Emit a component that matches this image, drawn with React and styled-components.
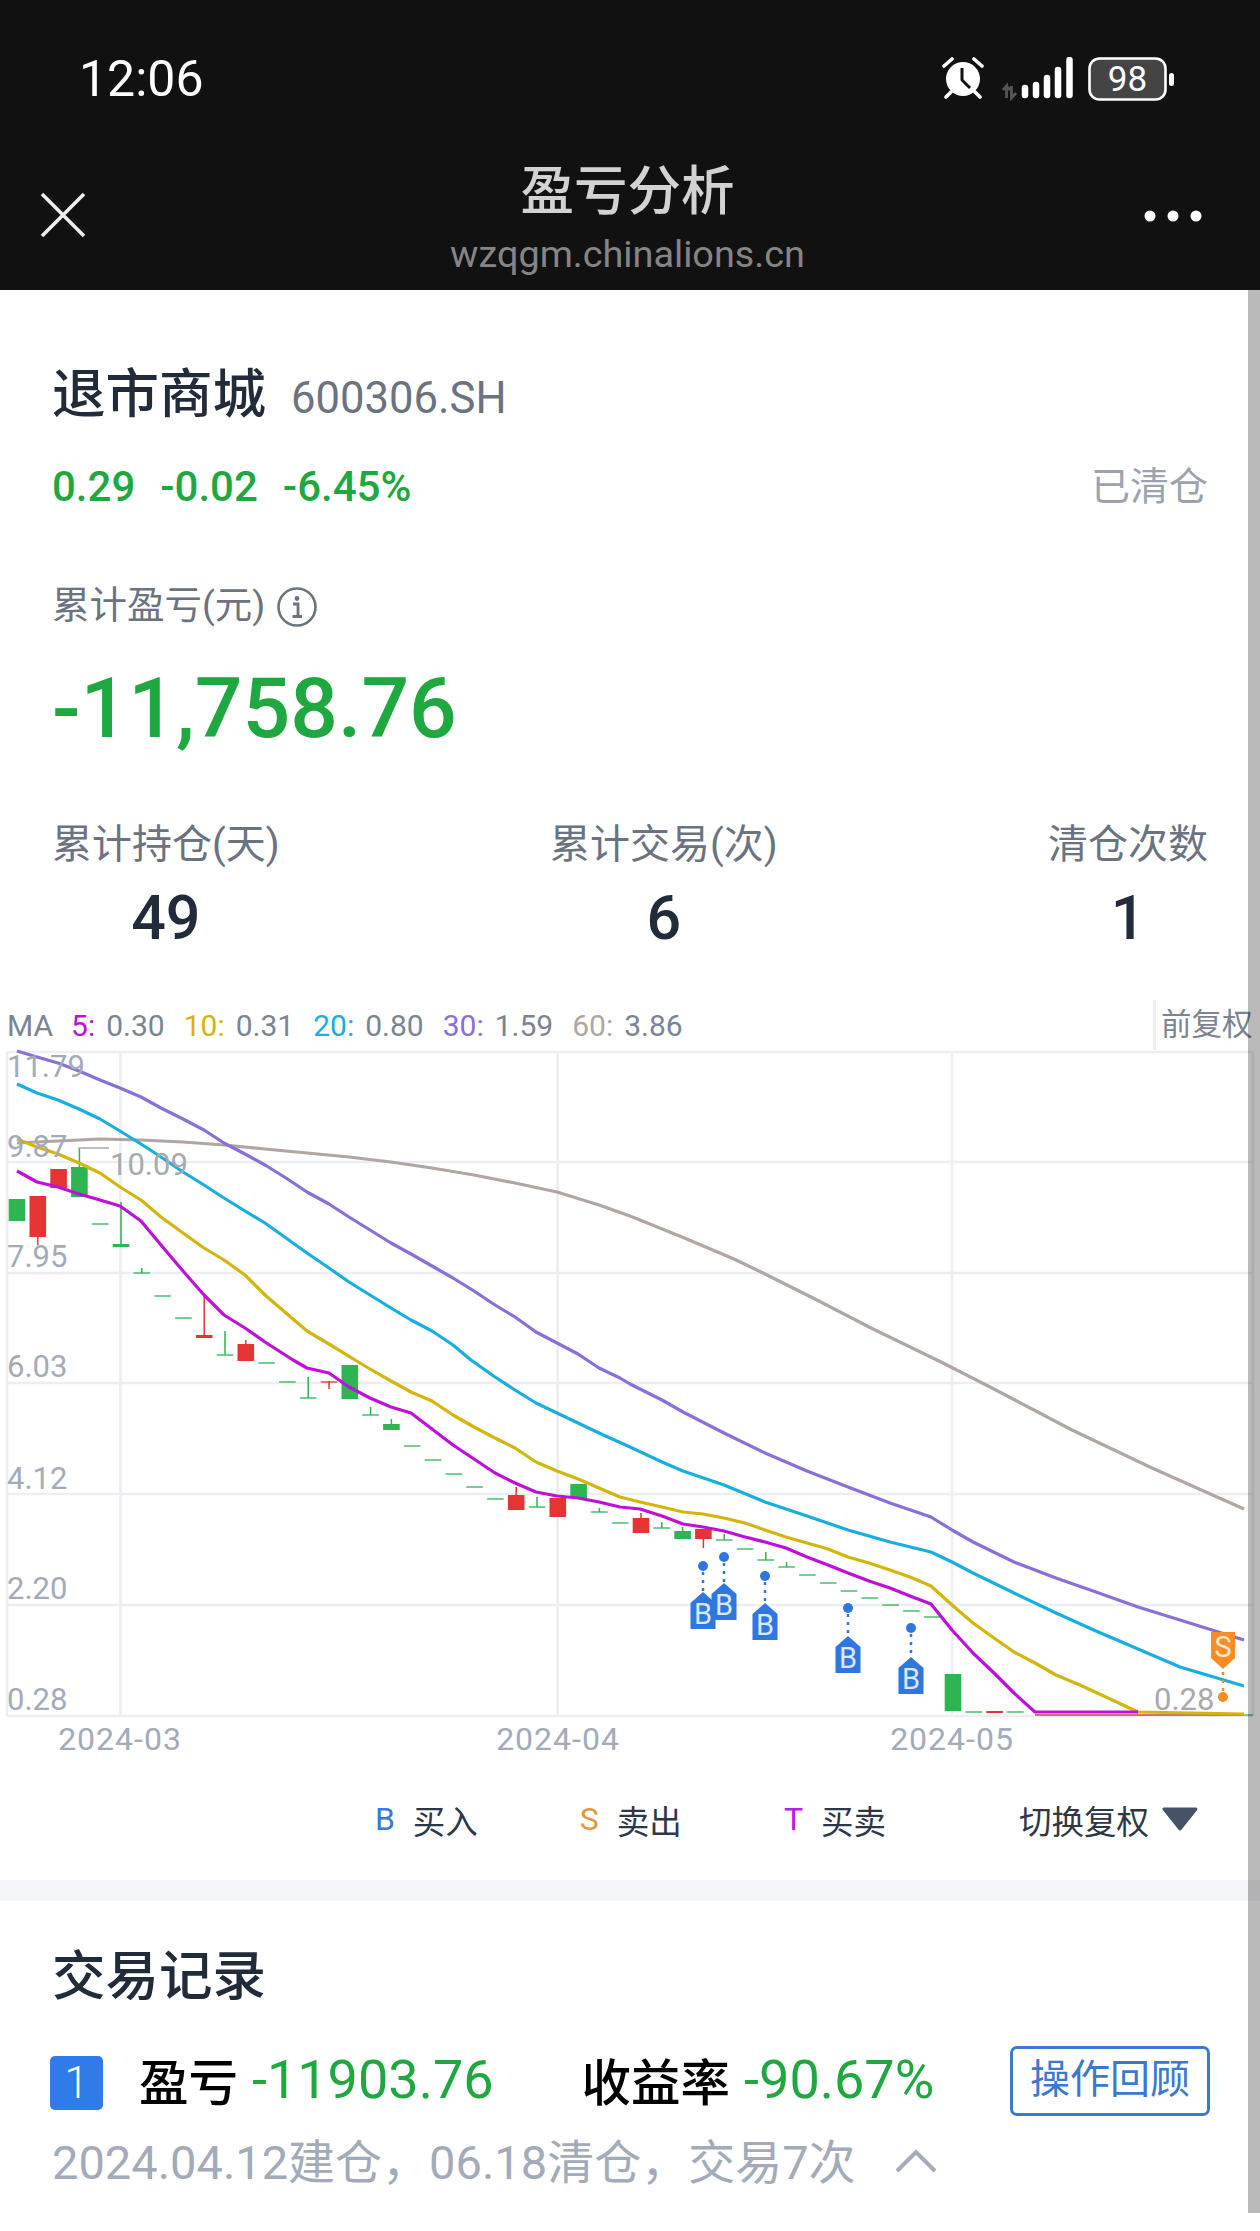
import React from "react";
import styled, { createGlobalStyle } from "styled-components";

const GlobalStyle = createGlobalStyle`
  html, body {
    margin: 0;
    padding: 0;
    background: #fff;
  }
  body {
    font-family: Roboto, "Noto Sans CJK SC", sans-serif;
  }
`;

const Page = styled.div`
  position: relative;
  width: 1260px;
  height: 2231px;
  overflow: hidden;
  background: #fff;
`;

const Scrollbar = styled.div`
  position: absolute;
  top: 290px;
  right: 0;
  width: 12px;
  height: 1923px;
  background: rgba(0, 0, 0, 0.27);
`;

const Header = styled.header`
  height: 290px;
  background: #111;
  box-sizing: border-box;
  padding-top: 50px;
`;

const StatusBar = styled.div`
  height: 58px;
  padding: 0 84px 0 79px;
  display: flex;
  align-items: center;
  justify-content: space-between;
`;

const Time = styled.div`
  color: #fff;
  font-size: 50px;
  line-height: 58px;
`;

const StatusIcons = styled.div`
  display: flex;
  align-items: flex-start;
  height: 44px;
`;

const NavBar = styled.div`
  position: relative;
  display: flex;
  justify-content: space-between;
  align-items: flex-end;
  padding: 56px 58px 56px 40px;
`;

const TitleBlock = styled.div`
  flex: 1;
  text-align: center;
  margin-left: 25px;
`;

const Title = styled.div`
  color: #d2d2d2;
  font-size: 53.5px;
  line-height: 56px;
  font-weight: 500;
`;

const SubTitle = styled.div`
  color: #858585;
  font-size: 37.8px;
  line-height: 40px;
  margin-top: 14px;
`;

const NavIcon = styled.svg`
  display: block;
  margin-bottom: ${(props) => props.lift}px;
`;

const Section = styled.section`
  padding: 0 52px;
`;

const NameRow = styled.div`
  display: flex;
  align-items: baseline;
  gap: 25px;
  padding-top: 75px;
`;

const StockName = styled.div`
  color: #222b3a;
  font-size: 53.5px;
  line-height: 60px;
  font-weight: 500;
`;

const StockCode = styled.div`
  color: #6b7280;
  font-size: 43.6px;
  line-height: 60px;
`;

const QuoteRow = styled.div`
  display: flex;
  align-items: center;
  margin-top: 35px;
  height: 44px;
`;

const Quote = styled.div`
  color: #1fa83f;
  font-size: 42px;
  font-weight: 500;
  margin-right: 25px;
`;

const Status = styled.div`
  color: #9ca3af;
  font-size: 39px;
  margin-left: auto;
  margin-bottom: 6px;
`;

const ProfitLabel = styled.div`
  display: flex;
  align-items: center;
  gap: 12px;
  margin-top: 71px;
  height: 44px;
  color: #6b7280;
  font-size: 37.5px;
`;

const InfoSvg = styled.svg`
  display: block;
  margin-top: 12px;
`;

const Profit = styled.div`
  color: #1fa83f;
  font-size: 84px;
  line-height: 100px;
  font-weight: 500;
  margin-top: 36px;
`;

const Stats = styled.div`
  display: flex;
  justify-content: space-between;
  margin-top: 62px;
`;

const Stat = styled.div`
  display: flex;
  flex-direction: column;
  align-items: center;
`;

const StatLabel = styled.div`
  color: #6b7280;
  font-size: 40px;
  line-height: 48px;
`;

const StatValue = styled.div`
  color: #222b3a;
  font-size: 61px;
  line-height: 64px;
  font-weight: 500;
  margin-top: 17px;
`;

const MaBar = styled.div`
  display: flex;
  align-items: center;
  height: 50px;
  margin-top: 50px;
  padding-left: 7px;
  font-size: 30px;
  color: #7b8494;
`;

const MaName = styled.span`
  margin-right: 18px;
`;

const MaItem = styled.span`
  margin-right: 19px;
  white-space: nowrap;
`;

const MaKey = styled.span`
  color: ${(props) => props.color};
  margin-right: 11px;
`;

const AdjustTag = styled.div`
  margin-left: auto;
  height: 50px;
  line-height: 50px;
  box-sizing: border-box;
  border-left: 3px solid #eceef4;
  padding-left: 5px;
  width: 107px;
  white-space: nowrap;
  font-size: 30.5px;
`;

const ChartSvg = styled.svg`
  display: block;
  width: 1260px;
  height: 720px;
  overflow: visible;
`;

const Legend = styled.div`
  display: flex;
  align-items: center;
  justify-content: flex-end;
  height: 50px;
  margin-top: 24px;
  padding-right: 61px;
  color: #2d3748;
  font-size: 32.5px;
`;

const LegendItem = styled.div`
  display: flex;
  align-items: center;
  gap: 18px;
  margin-right: 102px;
`;

const LegendKey = styled.span`
  color: ${(props) => props.color};
  font-size: 32px;
`;

const Switcher = styled.div`
  display: flex;
  align-items: center;
  gap: 12px;
  margin-left: 31px;
`;

const Divider = styled.div`
  height: 21px;
  margin-top: 36px;
  background: #f4f5f8;
`;

const RecordTitle = styled.div`
  color: #222b3a;
  font-size: 53.5px;
  line-height: 60px;
  font-weight: 500;
  padding-top: 46px;
`;

const RecordRow = styled.div`
  display: flex;
  align-items: center;
  margin-top: 39px;
  height: 70px;
`;

const Badge = styled.div`
  width: 53px;
  height: 54px;
  margin: 4px 36px 0 -2px;
  border-radius: 5px;
  background: #2f7bea;
  color: #fff;
  font-size: 44px;
  font-weight: 300;
  line-height: 54px;
  text-align: center;
`;

const RecordKey = styled.div`
  color: #000;
  font-size: 49.5px;
  font-weight: 500;
  margin: 0 14px 4px 0;
`;

const RecordValue = styled.div`
  color: #1fa83f;
  font-size: 54px;
  margin: 0 ${(props) => props.gap || 0}px 4px 0;
`;

const ReviewButton = styled.div`
  margin: 0 -2px 0 auto;
  width: 200px;
  height: 70px;
  box-sizing: border-box;
  border: 3px solid #3b78d0;
  border-radius: 7px;
  color: #3b78d0;
  font-size: 40px;
  line-height: 62px;
  text-align: center;
`;

const RecordMeta = styled.div`
  display: flex;
  align-items: center;
  margin-top: 12px;
  height: 60px;
  color: #a3abb8;
  font-size: 47px;
  white-space: nowrap;
`;

const Chevron = styled.svg`
  display: block;
  margin: 6px 0 0 39px;
`;

const MA_LINES = [
  { key: "5:", value: "0.30", color: "#bf10d8" },
  { key: "10:", value: "0.31", color: "#d4b50e" },
  { key: "20:", value: "0.80", color: "#19aee0" },
  { key: "30:", value: "1.59", color: "#8a6fd8" },
  { key: "60:", value: "3.86", color: "#b0a6a2" },
];

const GRID_Y = [1052, 1162, 1273, 1383, 1494, 1605, 1716];
const GRID_X = [7, 120.5, 557.6, 952, 1253];
const PRICE_LABELS = [
  ["11.79", 1077],
  ["9.87", 1157],
  ["7.95", 1267],
  ["6.03", 1377],
  ["4.12", 1489],
  ["2.20", 1599],
  ["0.28", 1710],
];
const DATE_LABELS = [
  ["2024-03", 120],
  ["2024-04", 558],
  ["2024-05", 952],
];

// [slot, colour, body top, body bottom, wick top, wick bottom]
const CANDLES = [
  [0, "g", 1199, 1221],
  [1, "r", 1196, 1237, 1196, 1245],
  [2, "r", 1169, 1188],
  [3, "g", 1167, 1197, 1149, 1197],
  [4, "g", 1224, 1224],
  [5, "g", 1244, 1247, 1202, 1247],
  [6, "g", 1273, 1273, 1268, 1273],
  [7, "g", 1296, 1296],
  [8, "g", 1318, 1318],
  [9, "r", 1335, 1338, 1296, 1338],
  [10, "g", 1355, 1355, 1331, 1355],
  [11, "r", 1344, 1361, 1340, 1361],
  [12, "g", 1363, 1363],
  [13, "g", 1382, 1382],
  [14, "g", 1398, 1398, 1377, 1398],
  [15, "r", 1382, 1382, 1381, 1389],
  [16, "g", 1365, 1399],
  [17, "g", 1415, 1415, 1407, 1415],
  [18, "g", 1424, 1430, 1419, 1430],
  [19, "g", 1446, 1446],
  [20, "g", 1460, 1460],
  [21, "g", 1474, 1474],
  [22, "g", 1487, 1487],
  [23, "g", 1499, 1499],
  [24, "r", 1495, 1510, 1487, 1510],
  [25, "g", 1507, 1507, 1497, 1507],
  [26, "r", 1498, 1517],
  [27, "g", 1484, 1498],
  [28, "g", 1512, 1512, 1508, 1512],
  [29, "g", 1523, 1523],
  [30, "r", 1518, 1533, 1513, 1533],
  [31, "g", 1528, 1528, 1522, 1528],
  [32, "g", 1531, 1539, 1527, 1539],
  [33, "r", 1529, 1539, 1529, 1548],
  [34, "g", 1540, 1540, 1534, 1540],
  [35, "g", 1549, 1549],
  [36, "g", 1560, 1560, 1552, 1560],
  [37, "g", 1567, 1567, 1562, 1567],
  [38, "g", 1575, 1575],
  [39, "g", 1583, 1583],
  [40, "g", 1591, 1591],
  [41, "g", 1598, 1598],
  [42, "g", 1605, 1605],
  [43, "g", 1611, 1611],
  [44, "g", 1617, 1617],
  [45, "g", 1674, 1711],
  [46, "g", 1712, 1712],
  [47, "r", 1711, 1713],
  [48, "g", 1712, 1712],
];

const CURVES = [
  {
    color: "#b0a6a2",
    points:
      "17,1143 37,1142 58,1141 100,1139 141,1140 183,1142 224,1145 265,1149 307,1153 349,1157 391,1162 432,1168 474,1175 515,1183 557,1192 599,1205 630,1216 682,1237 734,1259 763,1273 815,1299 871,1328 941,1362 992,1388 1072,1430 1152,1468 1244,1509",
  },
  {
    color: "#8a6fd8",
    points:
      "17,1051 37,1057 58,1063 79,1071 100,1080 120,1088 141,1097 161,1108 183,1119 204,1130 224,1143 245,1154 265,1165 286,1178 307,1192 329,1204 349,1217 370,1230 391,1243 411,1254 432,1266 453,1278 474,1291 495,1305 515,1317 536,1332 557,1343 578,1354 599,1368 620,1378 630,1384 662,1400 683,1412 724,1433 765,1453 807,1471 848,1487 890,1503 931,1517 952,1530 973,1542 1014,1562 1056,1578 1096,1592 1138,1607 1180,1620 1244,1640",
  },
  {
    color: "#19aee0",
    points:
      "17,1084 37,1093 58,1100 79,1109 100,1119 120,1131 141,1144 161,1157 183,1172 204,1185 224,1198 245,1211 265,1223 286,1238 307,1253 329,1268 349,1282 370,1295 391,1308 411,1320 432,1331 453,1345 471,1360 495,1377 515,1390 536,1403 557,1413 578,1423 599,1433 630,1447 662,1462 683,1471 724,1485 765,1502 807,1516 848,1530 890,1542 931,1552 952,1562 973,1573 1014,1593 1056,1613 1096,1631 1138,1649 1180,1667 1244,1686",
  },
  {
    color: "#d4b50e",
    points:
      "17,1139 37,1147 58,1154 79,1163 100,1173 120,1187 141,1200 161,1217 183,1233 204,1248 224,1260 245,1275 265,1295 286,1313 307,1331 329,1344 355,1360 370,1369 391,1381 411,1392 432,1401 453,1415 474,1427 495,1438 515,1448 536,1462 557,1471 578,1479 599,1488 620,1497 640,1502 662,1507 683,1512 703,1514 724,1518 745,1523 765,1530 786,1537 807,1543 828,1549 848,1557 869,1563 890,1570 910,1577 931,1586 952,1605 973,1623 994,1638 1014,1652 1035,1663 1056,1675 1080,1685 1108,1698 1138,1712 1244,1714",
  },
  {
    color: "#bf10d8",
    points:
      "17,1171 37,1182 58,1187 79,1194 100,1200 120,1206 141,1221 161,1245 183,1271 204,1295 224,1315 245,1328 265,1342 293,1360 307,1368 329,1373 349,1387 370,1398 391,1407 411,1413 432,1429 453,1445 474,1459 495,1473 515,1483 536,1492 557,1496 578,1498 599,1502 620,1507 640,1509 662,1516 683,1524 703,1527 724,1531 745,1537 765,1542 786,1548 807,1557 828,1565 848,1573 869,1581 890,1588 910,1596 931,1604 952,1630 973,1653 994,1673 1014,1693 1035,1712 1138,1712",
  },
];

const BUY_MARKS = [
  { x: 703, dot: 1566, top: 1592 },
  { x: 724, dot: 1557, top: 1583 },
  { x: 765, dot: 1576, top: 1603 },
  { x: 848, dot: 1608, top: 1636 },
  { x: 911, dot: 1628, top: 1657 },
];

const slotX = (slot) => 17 + 20.8 * slot;
const CANDLE_COLOR = { g: "#2db552", r: "#e53433" };

const Candle = ({ slot, kind, top, bottom, hi, lo }) => {
  const x = slotX(slot);
  const color = CANDLE_COLOR[kind];
  return (
    <g>
      {hi !== undefined && (
        <line x1={x} x2={x} y1={hi} y2={lo} stroke={color} strokeWidth="1.5" />
      )}
      {top === bottom ? (
        <line x1={x - 8.3} x2={x + 8.3} y1={top} y2={top} stroke={color} strokeWidth="1.3" />
      ) : (
        <rect x={x - 8.3} y={top} width="16.6" height={bottom - top} fill={color} />
      )}
    </g>
  );
};

const BuyMark = ({ x, dot, top }) => (
  <g>
    <circle cx={x} cy={dot} r="5" fill="#2f76e0" />
    <line x1={x} x2={x} y1={dot + 6} y2={top} stroke="#2f76e0" strokeWidth="2.5" strokeDasharray="3 5" />
    <path
      d={`M${x} ${top} L${x + 12.5} ${top + 11} V${top + 37} H${x - 12.5} V${top + 11} Z`}
      fill="#2f76e0"
    />
    <text x={x} y={top + 32} fontSize="29" fill="#dbe8fb" textAnchor="middle" fontFamily="Roboto, sans-serif">
      B
    </text>
  </g>
);

const SellMark = () => (
  <g>
    <circle cx="1223" cy="1697" r="5" fill="#fa8c25" />
    <line x1="1223" x2="1223" y1="1691" y2="1666" stroke="#fa8c25" strokeWidth="2.5" strokeDasharray="3 5" />
    <path d="M1211 1632 H1235 V1658 L1223 1669 L1211 1658 Z" fill="#fa8c25" />
    <text x="1223" y="1657" fontSize="29" fill="#ffe9d2" textAnchor="middle" fontFamily="Roboto, sans-serif">
      S
    </text>
  </g>
);

const KLineChart = () => (
  <ChartSvg viewBox="0 1050 1260 720">
    {GRID_Y.map((y) => (
      <line key={y} x1="7" x2="1253" y1={y} y2={y} stroke="#eceef4" strokeWidth="2.6" />
    ))}
    {GRID_X.map((x) => (
      <line key={x} x1={x} x2={x} y1="1052" y2="1716" stroke="#eceef4" strokeWidth="2.6" />
    ))}

    {CANDLES.map(([slot, kind, top, bottom, hi, lo]) => (
      <Candle key={slot} slot={slot} kind={kind} top={top} bottom={bottom} hi={hi} lo={lo} />
    ))}
    <line x1="1035" x2="1244" y1="1715" y2="1715" stroke="#c2483e" strokeWidth="1.5" />
    <line x1="1244" x2="1253" y1="1715" y2="1715" stroke="#2db552" strokeWidth="1.2" />

    <path d="M79 1149 V1148 H109" fill="none" stroke="#a9a9a9" strokeWidth="1.5" />

    {CURVES.map((curve) => (
      <polyline
        key={curve.color}
        points={curve.points}
        fill="none"
        stroke={curve.color}
        strokeWidth="3.2"
        strokeLinejoin="round"
      />
    ))}

    <g fontFamily="Roboto, sans-serif" fontSize="31" fill="#a3abb8">
      {PRICE_LABELS.map(([label, y]) => (
        <text key={label} x="7" y={y}>
          {label}
        </text>
      ))}
    </g>
    <g fontFamily="Roboto, sans-serif" fontSize="32" letterSpacing="1" fill="#a3abb8">
      {DATE_LABELS.map(([label, x]) => (
        <text key={label} x={x} y="1750" textAnchor="middle">
          {label}
        </text>
      ))}
    </g>
    <g fontFamily="Roboto, sans-serif" fontSize="31" fill="#a9a9a9">
      <text x="110" y="1175">10.09</text>
      <text x="1154" y="1710">0.28</text>
    </g>

    {BUY_MARKS.map((mark) => (
      <BuyMark key={mark.x} x={mark.x} dot={mark.dot} top={mark.top} />
    ))}
    <SellMark />
  </ChartSvg>
);

const AlarmIcon = () => (
  <svg width="42" height="42" viewBox="0 0 42 42">
    <circle cx="21" cy="22" r="17" fill="#fff" />
    <path d="M20 11 V23 L28 31" fill="none" stroke="#111" strokeWidth="3" strokeLinejoin="round" />
    <path d="M2 9 L10 2 M40 9 L32 2 M9 35 L4 40 M33 35 L38 40" stroke="#fff" strokeWidth="3.6" strokeLinecap="round" />
  </svg>
);

const SignalIcon = () => (
  <svg width="76" height="44" viewBox="0 0 76 44" style={{ marginLeft: 16 }}>
    <path d="M3 33 L6.5 29 V41 M6.5 29 L10 33 M11.5 29 V41 L16 36" fill="none" stroke="#555" strokeWidth="2.8" />
    <g stroke="#fff" strokeWidth="6.5" strokeLinecap="round">
      <line x1="25" x2="25" y1="31" y2="38" />
      <line x1="36" x2="36" y1="28" y2="38" />
      <line x1="47" x2="47" y1="21" y2="38" />
      <line x1="58" x2="58" y1="13" y2="38" />
      <line x1="69.5" x2="69.5" y1="3" y2="38" />
    </g>
  </svg>
);

const BatteryIcon = () => (
  <svg width="88" height="44" viewBox="0 0 88 44" style={{ marginLeft: 12 }}>
    <rect x="1.5" y="1.5" width="76" height="41" rx="10" fill="#444" stroke="#fff" strokeWidth="2.6" />
    <rect x="81" y="16" width="5" height="13" rx="2.5" fill="#fff" />
    <text x="39.5" y="34" fontSize="35" fill="#fff" textAnchor="middle" fontFamily="Roboto, sans-serif">
      98
    </text>
  </svg>
);

const InfoIcon = () => (
  <InfoSvg width="40" height="40" viewBox="0 0 40 40">
    <circle cx="20" cy="20" r="18.5" fill="none" stroke="#6b7280" strokeWidth="2.6" />
    <circle cx="20" cy="11.5" r="2.4" fill="#6b7280" />
    <path d="M16 17 H21 V29 M15.5 29.5 H25" fill="none" stroke="#6b7280" strokeWidth="2.8" />
  </InfoSvg>
);

const TriangleIcon = () => (
  <svg width="38" height="24" viewBox="0 0 38 24">
    <path d="M3 2 H35 L19 22 Z" fill="#475266" stroke="#475266" strokeWidth="3" strokeLinejoin="round" />
  </svg>
);

export default function App() {
  return (
    <Page>
      <GlobalStyle />
      <Header>
        <StatusBar>
          <Time>12:06</Time>
          <StatusIcons>
            <AlarmIcon />
            <SignalIcon />
            <BatteryIcon />
          </StatusIcons>
        </StatusBar>
        <NavBar>
          <NavIcon lift={36} width="46" height="46" viewBox="0 0 46 46">
            <path d="M2 2 L44 44 M44 2 L2 44" stroke="#eee" strokeWidth="3.6" />
          </NavIcon>
          <TitleBlock>
            <Title>盈亏分析</Title>
            <SubTitle>wzqgm.chinalions.cn</SubTitle>
          </TitleBlock>
          <NavIcon lift={52} width="58" height="12" viewBox="0 0 58 12">
            <circle cx="6" cy="6" r="5.5" fill="#fff" />
            <circle cx="29" cy="6" r="5.5" fill="#fff" />
            <circle cx="52" cy="6" r="5.5" fill="#fff" />
          </NavIcon>
        </NavBar>
      </Header>

      <Section>
        <NameRow>
          <StockName>退市商城</StockName>
          <StockCode>600306.SH</StockCode>
        </NameRow>
        <QuoteRow>
          <Quote>0.29</Quote>
          <Quote>-0.02</Quote>
          <Quote>-6.45%</Quote>
          <Status>已清仓</Status>
        </QuoteRow>
        <ProfitLabel>
          累计盈亏(元)
          <InfoIcon />
        </ProfitLabel>
        <Profit>-11,758.76</Profit>
        <Stats>
          <Stat>
            <StatLabel>累计持仓(天)</StatLabel>
            <StatValue>49</StatValue>
          </Stat>
          <Stat>
            <StatLabel>累计交易(次)</StatLabel>
            <StatValue>6</StatValue>
          </Stat>
          <Stat>
            <StatLabel>清仓次数</StatLabel>
            <StatValue>1</StatValue>
          </Stat>
        </Stats>
      </Section>

      <MaBar>
        <MaName>MA</MaName>
        {MA_LINES.map((line) => (
          <MaItem key={line.key}>
            <MaKey color={line.color}>{line.key}</MaKey>
            {line.value}
          </MaItem>
        ))}
        <AdjustTag>前复权</AdjustTag>
      </MaBar>
      <KLineChart />

      <Legend>
        <LegendItem>
          <LegendKey color="#3b78d8">B</LegendKey>买入
        </LegendItem>
        <LegendItem>
          <LegendKey color="#e8963a">S</LegendKey>卖出
        </LegendItem>
        <LegendItem>
          <LegendKey color="#b620e0">T</LegendKey>买卖
        </LegendItem>
        <Switcher>
          切换复权
          <TriangleIcon />
        </Switcher>
      </Legend>
      <Divider />

      <Section>
        <RecordTitle>交易记录</RecordTitle>
        <RecordRow>
          <Badge>1</Badge>
          <RecordKey>盈亏</RecordKey>
          <RecordValue gap={88}>-11903.76</RecordValue>
          <RecordKey>收益率</RecordKey>
          <RecordValue>-90.67%</RecordValue>
          <ReviewButton>操作回顾</ReviewButton>
        </RecordRow>
        <RecordMeta>
          2024.04.12建仓，06.18清仓，交易7次
          <Chevron width="42" height="24" viewBox="0 0 42 24">
            <path d="M2 22 L21 3 L40 22" fill="none" stroke="#a3abb8" strokeWidth="4" />
          </Chevron>
        </RecordMeta>
      </Section>
      <Scrollbar />
    </Page>
  );
}
